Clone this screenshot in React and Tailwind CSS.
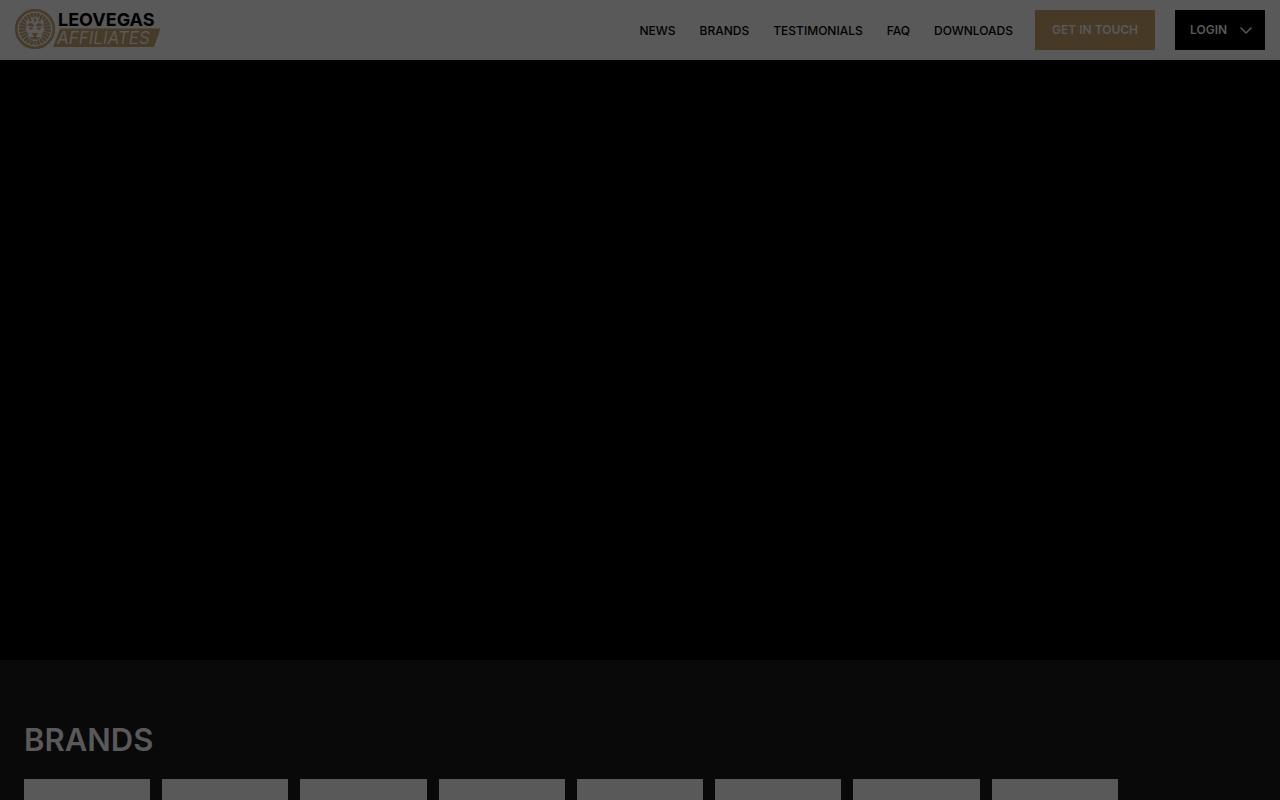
const links = ["News", "Brands", "Testimonials", "FAQ", "Downloads"];
const brands = ["Brand 1", "Brand 2", "Brand 3", "Brand 4", "Brand 5", "Brand 6", "Brand 7", "Brand 8"];
const rays = Array.from({ length: 26 }, (_, i) => (i * 360) / 26);

function Logo() {
  return (
    <svg width="146" height="42" viewBox="0 0 146 42" className="block overflow-visible" role="img">
      <path d="M45 19.500H145.500L139 38H38Z" fill="#463a28" />
      <circle cx="20" cy="20" r="21" fill="#595959" />
      <circle cx="20" cy="20" r="18.800" fill="none" stroke="#463a28" strokeWidth="2.600" />
      {rays.map((a) => (
        <path key={a} d="M18.500 4H21.500L20.700 12H19.300Z" fill="#463a28" transform={`rotate(${a} 20 20)`} />
      ))}
      <path
        d="M11 13L13.500 9.500L15 11L17 7.500L18.500 10L20 7L21.500 10L23 7.500L25 11L26.500 9.500L29 13L28 17L29.500 21L27 24L26.500 29L23 31L20 35L17 31L13.500 29L13 24L10.500 21L12 17Z"
        fill="#595959"
      />
      <path
        d="M12.500 15L16.500 14L19 16L18.500 17.500L13.500 17ZM27.500 15L23.500 14L21 16L21.500 17.500L26.500 17ZM14 18L18 19L17 21L14.500 20ZM26 18L22 19L23 21L25.500 20ZM17 24H23L21.500 27L20 28L18.500 27ZM14.500 28.500L20 28L25.500 28.500L22.500 30.500H17.500ZM18 32H22L20 35ZM13.500 9L17 11.500L15 13ZM26.500 9L23 11.500L25 13ZM18.500 10H21.500L20 14Z"
        fill="#463a28"
      />
      <text x="43" y="17" fontSize="18" fontWeight="700" fontFamily="Inter, sans-serif" fill="#000">
        LEOVEGAS
      </text>
      <text x="42" y="35" fontSize="17" fontStyle="italic" fontFamily="Inter, sans-serif" fill="#5b5855">
        AFFILIATES
      </text>
    </svg>
  );
}

export default function App() {
  return (
    <div className="h-screen overflow-hidden bg-black font-['Inter',sans-serif]">
      <header className="flex h-15 items-center justify-between bg-[#595959] px-[15px]">
        <a href="#home">
          <Logo />
        </a>
        <div className="flex items-center gap-5">
          <nav className="mr-0.5 flex items-center gap-6">
            {links.map((label) => (
              <a key={label} href={"#" + label.toLowerCase()} className="pt-px text-xs font-medium text-black uppercase">
                {label}
              </a>
            ))}
          </nav>
          <button className="h-10 w-[120px] bg-[#463a26] text-xs font-semibold text-[#595959] uppercase">
            Get in touch
          </button>
          <button className="flex h-10 w-[90px] items-center justify-between bg-black pr-3 pl-[15px] text-xs font-semibold text-[#595959] uppercase">
            Login
            <svg width="14" height="9" viewBox="0 0 14 9" fill="none" stroke="#595959" strokeWidth="1.500">
              <path d="M1.500 1.500L7 7L12.500 1.500" />
            </svg>
          </button>
        </div>
      </header>
      <main>
        <div className="h-[600px] bg-black" />
        <section id="brands" className="bg-[#090909] px-6 pt-15 pb-15">
          <h2 className="text-[31px] leading-10 font-semibold text-[#595959]">BRANDS</h2>
          <ul className="mt-[19px] grid grid-cols-9 gap-3">
            {brands.map((name) => (
              <li key={name} className="h-32 bg-[#595959]" />
            ))}
          </ul>
        </section>
      </main>
    </div>
  );
}
